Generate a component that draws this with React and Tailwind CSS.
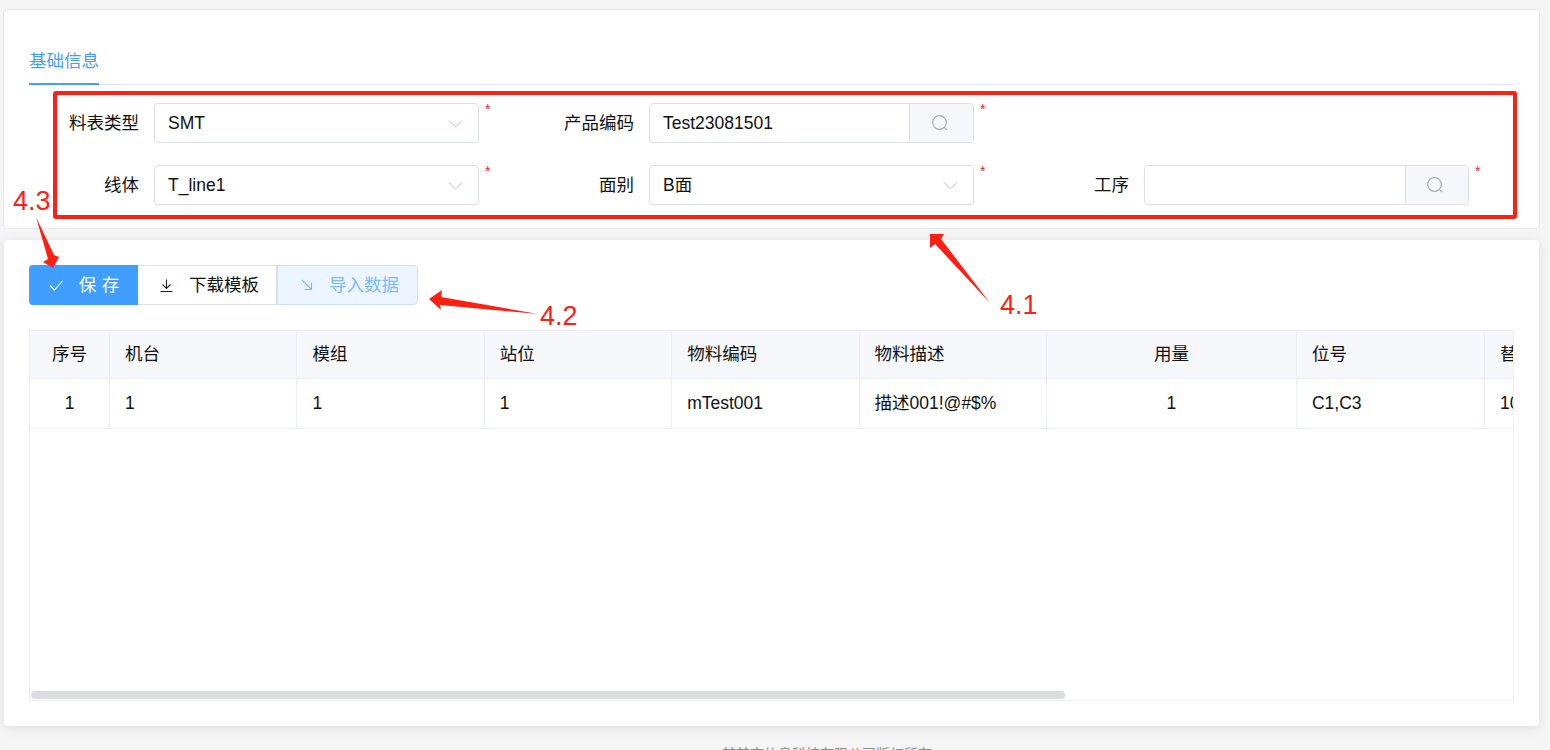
import React from "react";

const FONT = '"Liberation Sans","Noto Sans CJK SC",sans-serif';

const Chevron = () => (
  <svg width="15" height="15" viewBox="0 0 15 15" fill="none" stroke="#b8bcc4" strokeWidth="1">
    <path d="M1 4.5 L7.5 11 L14 4.5" />
  </svg>
);
const Search = () => (
  <svg width="18" height="18" viewBox="0 0 18 18" fill="none" stroke="#a8abb2" strokeWidth="1.2">
    <circle cx="8.5" cy="8.5" r="6.8" />
    <path d="M13.3 13.3 L16 16" />
  </svg>
);
const Star = () => <span className="ml-[6px] mt-[-1px] self-start text-[14px] leading-[14px] text-[#f5222d]">*</span>;

function Label({ children, w }) {
  return <div className={`${w} shrink-0 pr-[15px] text-right text-[17.5px] text-[#111]`}>{children}</div>;
}
function Select({ value }) {
  return (
    <div className="flex h-10 w-[325px] items-center justify-between rounded border border-[#dcdfe6] bg-white pl-[13px] pr-[15px] text-[17.5px] text-[#111]">
      <span>{value}</span>
      <Chevron />
    </div>
  );
}
function SearchInput({ value, btn }) {
  return (
    <div className="flex h-10 w-[325px] overflow-hidden rounded border border-[#dcdfe6] bg-white text-[17.5px] text-[#111]">
      <div className="flex min-w-0 flex-1 items-center pl-[13px]">{value}</div>
      <div className={`flex ${btn} shrink-0 items-center justify-center border-l border-[#dcdfe6] bg-[#f5f7fa] pr-[3px]`}>
        <Search />
      </div>
    </div>
  );
}

const COLS = [
  ["w-[80px]", "序号", "1", "center"],
  ["w-[187.4px]", "机台", "1", "left"],
  ["w-[187.4px]", "模组", "1", "left"],
  ["w-[187.4px]", "站位", "1", "left"],
  ["w-[187.4px]", "物料编码", "mTest001", "left"],
  ["w-[187.4px]", "物料描述", "描述001!@#$%", "left"],
  ["w-[250px]", "用量", "1", "center"],
  ["w-[188px]", "位号", "C1,C3", "left"],
  ["w-[188px]", "替代料", "1001", "left"],
];

function Row({ head }) {
  return (
    <div className={`flex border-b border-[#ebeef5] ${head ? "h-[48px] bg-[#f5f7fa]" : "h-[50px] bg-white"}`}>
      {COLS.map(([w, h, v, align], i) => (
        <div
          key={i}
          className={`${w} flex shrink-0 items-center overflow-hidden whitespace-nowrap border-r border-[#ebeef5] px-[15px] text-[17.5px] text-[#111] ${align === "center" ? "justify-center" : "justify-start"}`}
        >
          {head ? h : v}
        </div>
      ))}
    </div>
  );
}

function Arrow({ className, w, h, points }) {
  return (
    <svg className={`absolute ${className}`} width={w} height={h} viewBox={`0 0 ${w} ${h}`}>
      <polygon points={points} fill="#ff2014" />
    </svg>
  );
}

function Note({ className, children }) {
  return <div className={`absolute text-[27px] leading-[34px] text-[#ff2014] ${className}`}>{children}</div>;
}

export default function App() {
  return (
    <div className="relative h-[750px] w-[1550px] overflow-hidden bg-[#f5f5f5]" style={{ fontFamily: FONT }}>
      <div className="flex flex-col pl-[3px] pr-[10px] pt-[9px]">
        <section className="h-[220px] rounded border border-[#e4e7ed] bg-white pl-[25px] pr-[24px] pt-[28px]">
          <div className="flex h-[47px] border-b border-[#e4e7ed]">
            <div className="flex h-[47px] w-[70px] items-center justify-center whitespace-nowrap border-b-2 border-[#409eff] pt-[2px] text-[17.5px] text-[#409eff]">基础信息</div>
          </div>
          <div className="mt-[18px] flex flex-col gap-[22px]">
            <div className="flex h-10 items-center">
              <Label w="w-[125px]">料表类型</Label>
              <Select value="SMT" />
              <Star />
              <div className="w-[68.5px]" />
              <Label w="w-[90px]">产品编码</Label>
              <SearchInput value="Test23081501" btn="w-[64px]" />
              <Star />
            </div>
            <div className="flex h-10 items-center">
              <Label w="w-[125px]">线体</Label>
              <Select value="T_line1" />
              <Star />
              <div className="w-[68.5px]" />
              <Label w="w-[90px]">面别</Label>
              <Select value="B面" />
              <Star />
              <div className="w-[68.5px]" />
              <Label w="w-[90px]">工序</Label>
              <SearchInput value="" btn="w-[63px]" />
              <Star />
            </div>
          </div>
        </section>

        <section className="mx-px mt-[11px] h-[486px] rounded bg-white pl-[25px] pr-[25px] pt-[25px] shadow-[0_2px_12px_0_rgba(0,0,0,0.1)]">
          <div className="flex h-10 text-[17.5px]">
            <div className="flex w-[109px] items-center justify-center gap-[15px] rounded-l bg-[#409eff] text-white">
              <svg width="16" height="16" viewBox="0 0 16 16" fill="none" stroke="#fff" strokeWidth="1.1"><path d="M2 8.5 L6.5 13 L14.5 4" /></svg>
              <span className="mr-[-5.5px] tracking-[5.5px]">保存</span>
            </div>
            <div className="flex w-[139px] items-center justify-center gap-[15px] border-y border-r border-[#dcdfe6] bg-white pl-[4px] text-[#111]">
              <svg width="15" height="15" viewBox="0 0 15 15" fill="none" stroke="#222" strokeWidth="1.1"><path d="M7.5 1.5 V10 M3.5 6.5 L7.5 10.5 L11.5 6.5 M1.5 13.5 H13.5" /></svg>
              <span>下载模板</span>
            </div>
            <div className="flex w-[141px] items-center justify-center gap-[15px] rounded-r border border-[#c6e2ff] bg-[#ecf5ff] pl-[4px] text-[#79bbff]">
              <svg width="14" height="14" viewBox="0 0 14 14" fill="none" stroke="#79bbff" strokeWidth="1.1"><path d="M2 2 L11.5 11.5 M11.5 4.5 V11.5 H4.5" /></svg>
              <span>导入数据</span>
            </div>
          </div>

          <div className="relative mt-[25px] h-[371px] overflow-hidden border border-[#ebeef5] bg-white">
            <div className="w-[1700px]">
              <Row head />
              <Row />
            </div>
            <div className="absolute bottom-[1px] left-[1px] h-2 w-[1034px] rounded bg-[#dcdde0]" />
          </div>
        </section>

        <div className="ml-[719px] mt-[20px] whitespace-nowrap text-[14px] leading-[16px] text-[#8a8a8a]">某某市信息科技有限公司版权所有</div>
      </div>

      {/* annotations over the screenshot */}
      <div className="absolute left-[53px] top-[91px] h-[128px] w-[1464px] rounded-[3px] border-4 border-[#ff2014]" />
      <Note className="left-[13px] top-[184px]">4.3</Note>
      <Note className="left-[540px] top-[299px]">4.2</Note>
      <Note className="left-[1000px] top-[288px]">4.1</Note>
      <Arrow className="left-[30px] top-[215px]" w={34} h={56} points="6,2 24,40 29,42 23,53 13,47 18,44" />
      <Arrow className="left-[426px] top-[288px]" w={116} h={26} points="3,11 16,2 15,9 112,26 14,17 15,22" />
      <Arrow className="left-[926px] top-[230px]" w={66} h={78} points="4,4 18,4 15,9 64,73 9,14 4,18" />
    </div>
  );
}
